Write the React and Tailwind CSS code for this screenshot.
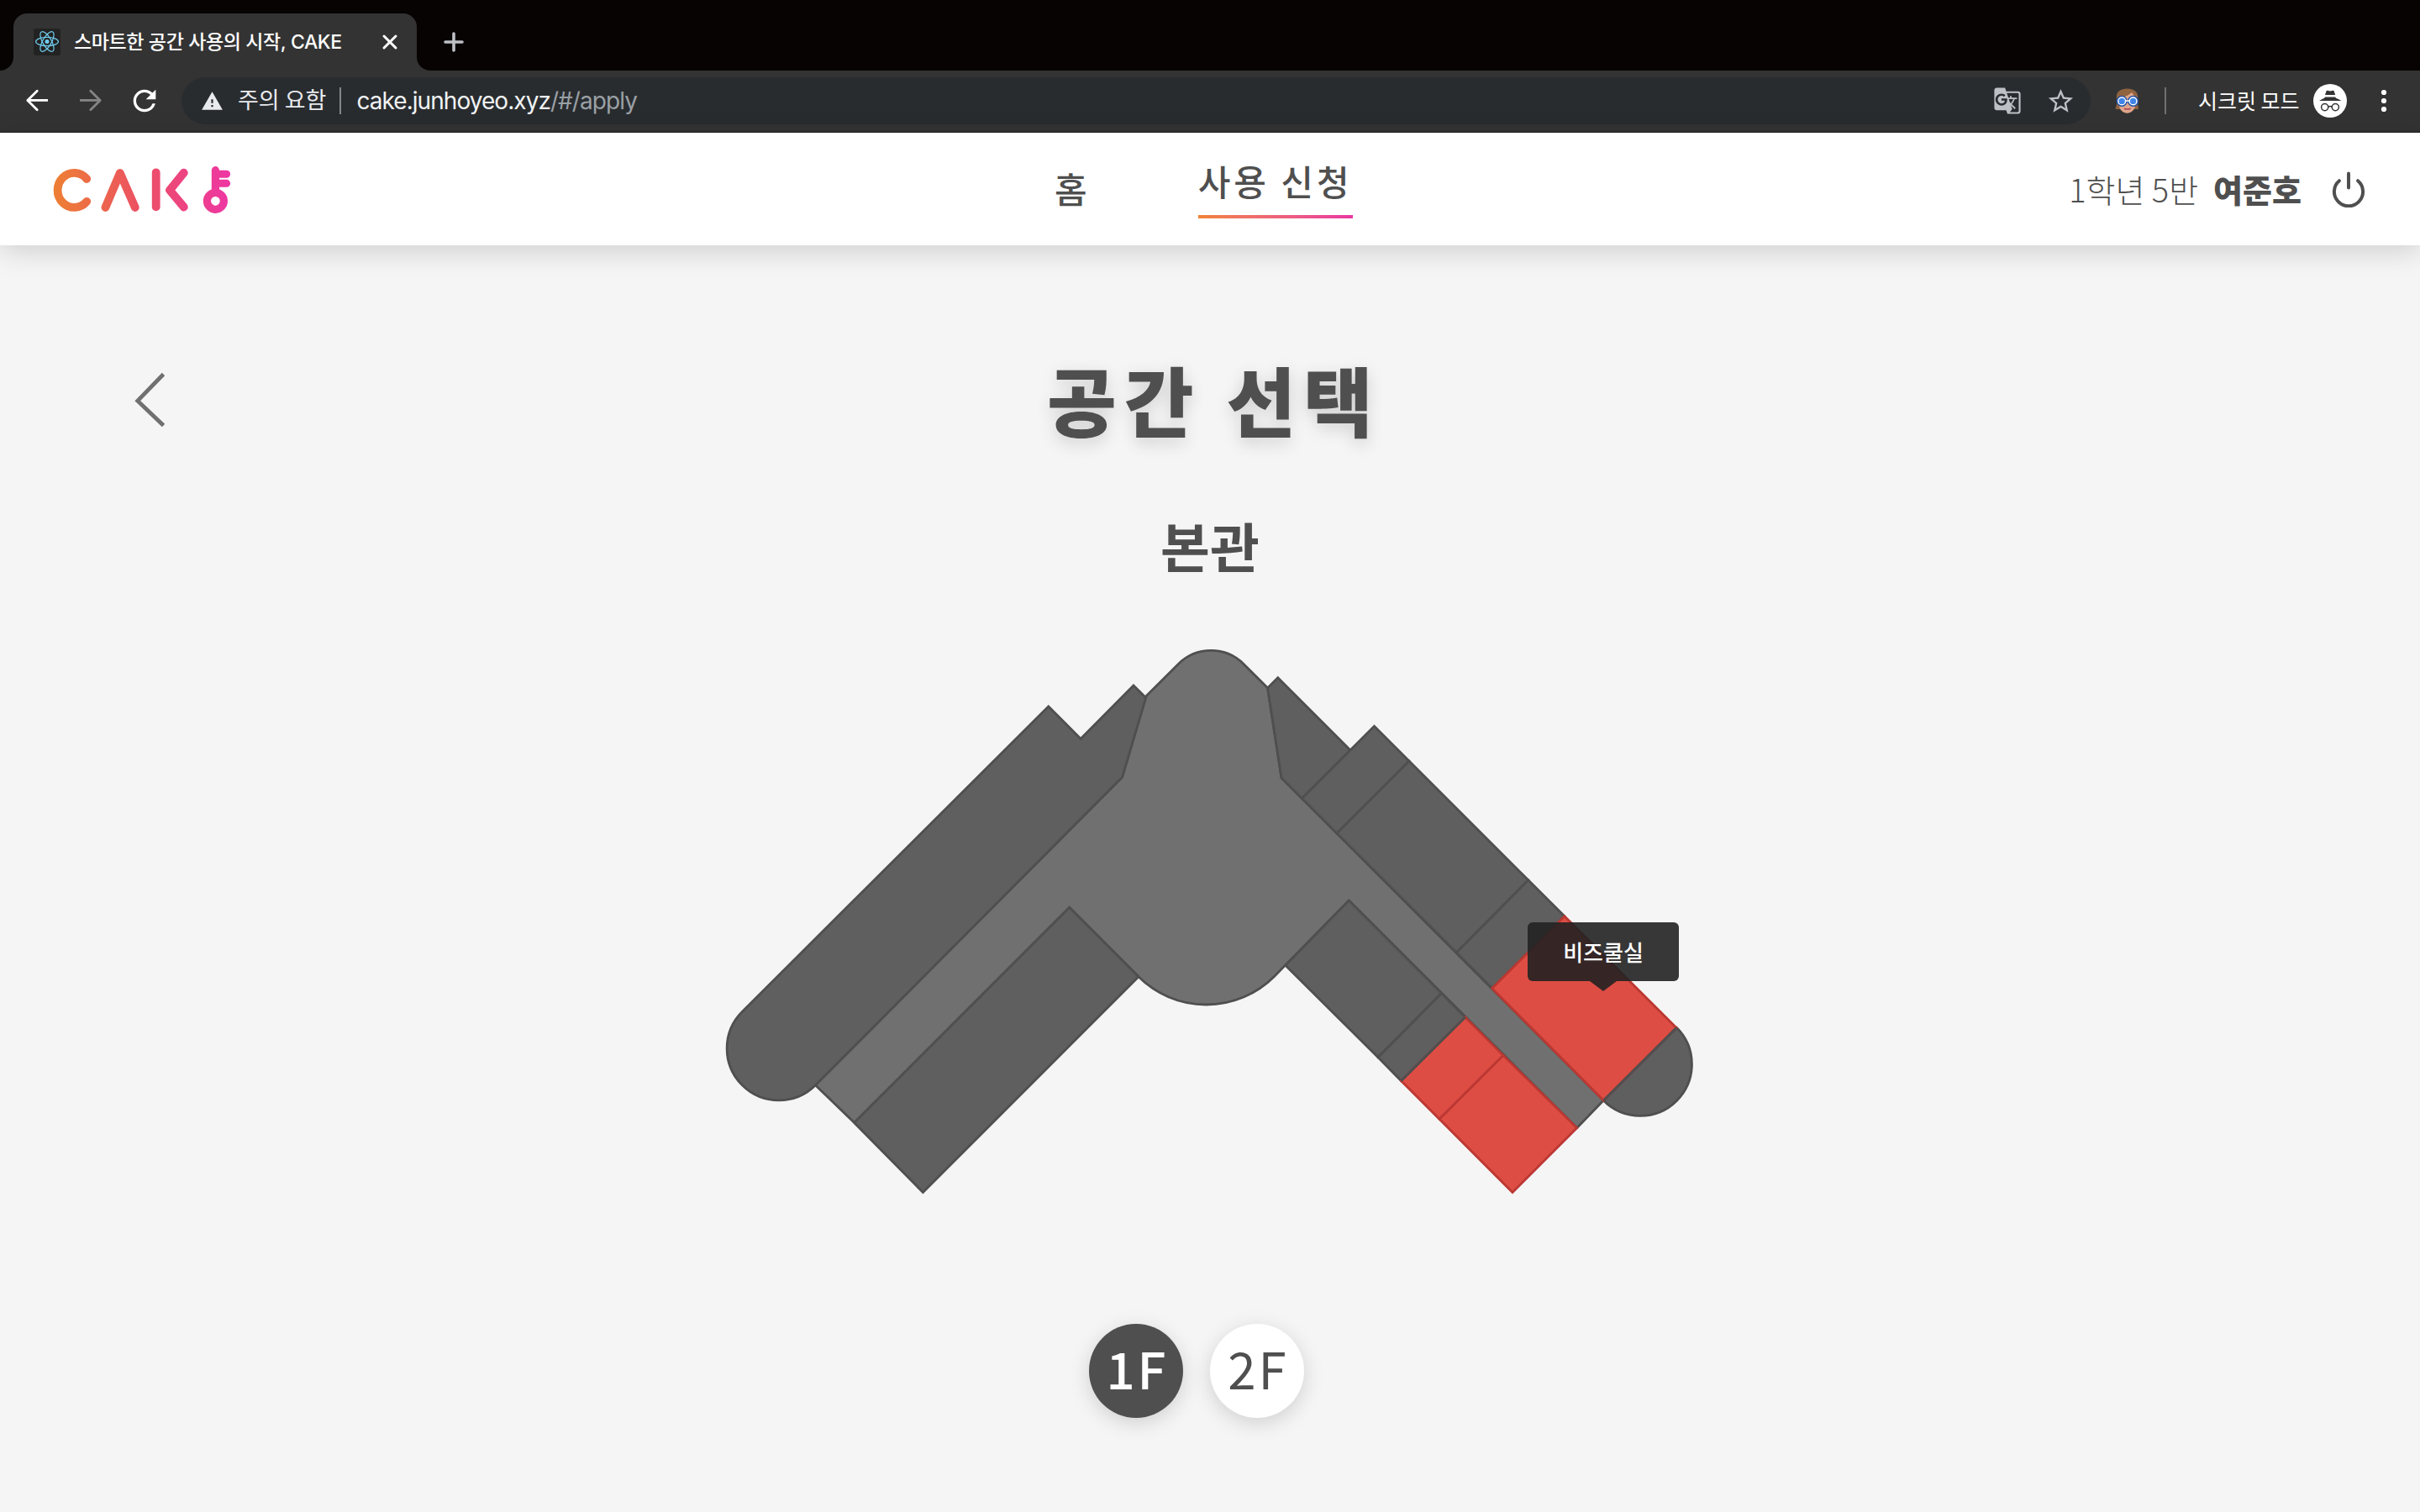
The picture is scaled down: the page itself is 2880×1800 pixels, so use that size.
import React from "react";
import { MdGTranslate, MdRefresh, MdStarBorder, MdWarning } from "react-icons/md";

const NOTO = "font-['Noto_Sans_CJK_KR',sans-serif]";

const ReactMark = () => (
  <svg viewBox="0 0 32 32" className="size-8 shrink-0 rounded-[3px] bg-[#222222]">
    <g fill="none" stroke="#6fcdee" strokeWidth="1.2" transform="translate(16 15.5)">
      <ellipse rx="13.4" ry="5.2" />
      <ellipse rx="13.4" ry="5.2" transform="rotate(60)" />
      <ellipse rx="13.4" ry="5.2" transform="rotate(120)" />
      <circle r="2.5" fill="#6fcdee" stroke="none" />
    </g>
  </svg>
);

const ArrowIcon = ({ className }) => (
  <svg viewBox="0 0 40 40" className={className} fill="none" stroke="currentColor" strokeWidth="2.8">
    <path d="M8.5 19.4H33" />
    <path d="M20.2 8.2L8.8 19.4L20.2 30.8" strokeLinecap="round" strokeLinejoin="round" />
  </svg>
);

const Avatar = () => (
  <svg viewBox="0 0 29 30" className="ml-[29px] h-[30px] w-[29px] shrink-0">
    <path d="M1.8 10C1.8 4 7 .4 14.5 .4S27.2 4 27.2 10V19L28 25H.5L2 19Z" fill="#916440" />
    <path d="M5 10L14 9L20 5L24 10V20C24 26 19 29.7 14.5 29.7S5 26 5 20Z" fill="#dfa58a" />
    <path d="M5 11C11 11 17 8 20 4.5L24.5 11V6L17 3L6 5Z" fill="#916440" />
    <circle cx="8.2" cy="15.4" r="5.3" fill="#3f86ea" stroke="#1d4fa6" strokeWidth="2.6" />
    <circle cx="21.6" cy="15.4" r="5.3" fill="#3f86ea" stroke="#1d4fa6" strokeWidth="2.6" />
    <circle cx="8.2" cy="15.4" r="4.4" fill="none" stroke="#ffffff" strokeWidth="1.4" />
    <circle cx="21.6" cy="15.4" r="4.4" fill="none" stroke="#ffffff" strokeWidth="1.4" />
    <path d="M13 15H17" stroke="#ffffff" strokeWidth="1.5" />
    <path d="M11 24.2Q14.8 26 18.6 24.2" fill="none" stroke="#a8485b" strokeWidth="1.5" />
  </svg>
);

const Incognito = () => (
  <svg viewBox="0 0 40 40" className="ml-4 size-10 shrink-0">
    <circle cx="20" cy="20" r="20" fill="#ffffff" />
    <g fill="#333333">
      <path d="M14 13L15.6 8.2Q16 7.5 17 7.8L20 8.6L23.3 7.8Q24.2 7.5 24.6 8.2L26.2 13Z" />
      <path d="M7 20Q11 17.6 13.2 16.8L14 15.6H26.2L27 16.8Q29.5 17.6 33.5 20Z" />
    </g>
    <g fill="none" stroke="#333333" strokeWidth="1.5">
      <circle cx="13.7" cy="27.6" r="4.1" />
      <circle cx="26.3" cy="27.6" r="4.1" />
      <path d="M17.8 27Q20 26 22.2 27" />
    </g>
  </svg>
);

const TabStrip = () => (
  <div className="flex h-[84px] items-end bg-[#080303]">
    <div className="size-4 bg-[#333333]">
      <div className="size-4 rounded-br-2xl bg-[#080303]" />
    </div>
    <div className="flex h-[68px] w-[480px] items-center rounded-t-2xl bg-[#333333] pl-6">
      <ReactMark />
      <span className="ml-4 w-[349px] shrink-0 font-['Inter','Noto_Sans_CJK_KR',sans-serif] text-[23px] leading-8 font-medium tracking-[-0.38px] whitespace-nowrap text-white">
        스마트한 공간 사용의 시작, CAKE
      </span>
      <svg viewBox="0 0 20 20" className="ml-[17px] size-5 shrink-0" stroke="#ffffff" strokeWidth="3" strokeLinecap="round">
        <path d="M3 3L17 17M17 3L3 17" />
      </svg>
    </div>
    <div className="size-4 bg-[#333333]">
      <div className="size-4 rounded-bl-2xl bg-[#080303]" />
    </div>
    <div className="ml-4 flex h-[68px] items-center">
      <svg viewBox="0 0 24 24" className="size-6" stroke="#bdc0c5" strokeWidth="3.6" strokeLinecap="round">
        <path d="M12 2V22M2 12H22" />
      </svg>
    </div>
  </div>
);

const Toolbar = () => (
  <div className="flex h-[74px] items-center border-b border-[#222222] bg-[#333333] pb-px pl-6 text-white">
    <ArrowIcon className="size-10 shrink-0 text-white" />
    <ArrowIcon className="ml-6 size-10 shrink-0 -scale-x-100 text-[#858585]" />
    <MdRefresh className="ml-6 size-10 shrink-0" />
    <div className="ml-6 flex h-14 w-[2272px] shrink-0 items-center rounded-full bg-[#292c2f] pr-[18px] pl-[23px]">
      <MdWarning className="size-[27px] text-[#e8eaed]" />
      <span className={`${NOTO} -mt-1 ml-[17px] text-[27px] leading-9 text-[#e8eaed]`}>주의 요함</span>
      <span className="ml-4 h-8 w-0.5 bg-[#85888b]" />
      <span className="ml-[18px] font-['Inter',sans-serif] text-[28px] leading-9 tracking-[-0.95px] text-[#f1f3f4]">
        cake.junhoyeo.xyz<span className="text-[#9aa0a6]">/#/apply</span>
      </span>
      <MdGTranslate className="ml-auto size-[34px] text-[#bdc1c6]" />
      <MdStarBorder className="ml-[29px] size-[35px] text-[#bdc1c6]" />
    </div>
    <Avatar />
    <span className="ml-[30px] h-8 w-0.5 shrink-0 bg-[#707070]" />
    <span className={`${NOTO} -mt-0.5 ml-[38px] text-[25px] leading-9 whitespace-nowrap`}>시크릿 모드</span>
    <Incognito />
    <svg viewBox="0 0 8 28" className="ml-10 h-7 w-2 shrink-0" fill="#ffffff">
      <circle cx="4" cy="4" r="3.1" />
      <circle cx="4" cy="14" r="3.1" />
      <circle cx="4" cy="24" r="3.1" />
    </svg>
  </div>
);

const Logo = () => (
  <svg viewBox="60 193 220 64" className="h-16 w-[220px] shrink-0" role="img" aria-label="CAKE">
    <defs>
      <linearGradient id="brand" gradientUnits="userSpaceOnUse" x1="64" y1="0" x2="274" y2="0">
        <stop offset="0" stopColor="#ed7f33" />
        <stop offset="0.5" stopColor="#ec5064" />
        <stop offset="1" stopColor="#ee36a3" />
      </linearGradient>
    </defs>
    <g fill="none" stroke="url(#brand)" strokeWidth="9.8" strokeLinecap="round" strokeLinejoin="round">
      <path d="M103.2 213A19.7 20.5 0 1 0 103.2 239.8" />
      <path d="M125.4 247L142.8 206L160.8 247" />
      <path d="M185.7 205.3L185.71 246.4" />
      <path d="M218.8 205.7L202 226.4L218.8 246.5" />
      <circle cx="256.4" cy="239.3" r="10" strokeWidth="9.2" />
      <path d="M256.4 202.7L256.41 228" strokeWidth="9.2" />
      <path d="M258 207.2L269.6 207.21M258 218.3L269.6 218.31" strokeWidth="9" />
    </g>
  </svg>
);

const Header = () => (
  <header className="relative z-10 flex h-[134px] items-center bg-white pl-[60px] text-[#4f4f4f] shadow-[0_6px_32px_rgba(0,0,0,0.16)]">
    <Logo />
    <nav className={`${NOTO} ml-[975px] flex h-full text-[42px] font-medium tracking-[4px]`}>
      <a className="mt-9 leading-[60px]">홈</a>
      <a className="mt-[27px] ml-32 flex w-[184px] flex-col whitespace-nowrap">
        <span className="leading-[60px]">사용 신청</span>
        <span className="mt-[11px] h-1 bg-linear-to-r from-[#f08336] to-[#ea35a2]" />
      </a>
    </nav>
    <div className={`${NOTO} ml-auto flex items-center text-[38px] leading-[60px] whitespace-nowrap`}>
      <span className="font-light">1학년 5반</span>
      <span className="ml-[18px] font-black">여준호</span>
      <svg viewBox="0 0 44 44" className="mr-[63px] ml-[34px] size-11" fill="none" stroke="currentColor" strokeWidth="4" strokeLinecap="round">
        <path d="M10.9 12.2A17.1 17.1 0 1 0 33.1 12.2" />
        <path d="M22 3.6V20.4" />
      </svg>
    </div>
  </header>
);

const ROOMS = [
  // left wing
  "M1247.8 840.9L1286.1 879.5L1349 816L1363.7 830.6L1335.5 925.3L970.6 1291.8A61.4 61.4 0 0 1 883.2 1204.5Z",
  "M1272.7 1080.2L1355 1162.8L1098.4 1419.5L1016.7 1336.6Z",
  // right wing, outer side
  "M1508.6 819L1520.8 806.8L1607 893L1549.5 950.5L1525 926Z",
  "M1607 893L1635.5 864.6L1677 906.1L1591 992L1549.5 950.5Z",
  "M1677 906.1L1818.8 1047.8L1733.3 1134L1591 992Z",
  "M1818.8 1047.8L1861.9 1090.7L1775.7 1176.6L1733.3 1134Z",
  "M1995.5 1223.5A61.4 61.4 0 1 1 1908.4 1310.3Z",
  // right wing, inner side
  "M1605.3 1071.9L1715.5 1182.5L1640 1258.8L1529.8 1149.2Z",
  "M1715.5 1182.5L1743.7 1211L1667.5 1286.7L1640 1258.8Z",
];

const OPEN_ROOMS = [
  "M1861.9 1090.7L1995 1223.5L1908.3 1310L1775.7 1176.6Z",
  "M1743.7 1211L1789 1256.4L1713 1332.3L1667.5 1286.7Z",
  "M1789 1256.4L1876.7 1342.8L1800 1419.6L1713 1332.3Z",
];

const HALL =
  "M1402.4 790.4A55 55 0 0 1 1480 790.4L1508.6 819L1525 926L1908.3 1310L1876.7 1342.8L1605.3 1071.9L1516 1163A114.4 114.4 0 0 1 1355 1162.8L1272.7 1080.2L1016.7 1336.6L970.3 1291.8L1335.5 925.3L1363.7 829.1Z";

const FloorMap = () => (
  <div className="relative mt-16 h-[672px] w-[1200px]">
    <svg viewBox="840 760 1200 672" className="h-[672px] w-[1200px]">
      <path d={HALL} fill="#707070" stroke="#4f4f4f" strokeWidth="2.8" />
      <g fill="#5f5f5f" stroke="#4f4f4f" strokeWidth="2.8">
        {ROOMS.map((d) => (
          <path key={d} d={d} />
        ))}
      </g>
      <g fill="#de4d44" stroke="#bb3832" strokeWidth="2.8">
        {OPEN_ROOMS.map((d) => (
          <path key={d} d={d} />
        ))}
      </g>
      <path d="M1995 1223.5L1908.3 1310M1743.7 1211L1667.5 1286.7" stroke="#4f4f4f" strokeWidth="2.8" />
    </svg>
    <div className="absolute top-[338px] left-[978px] flex w-[180px] flex-col items-center">
      <div className={`${NOTO} flex h-[70px] w-full items-center justify-center rounded-md bg-[#222222]/90 text-[26px] leading-[38px] font-medium text-white`}>
        비즈쿨실
      </div>
      <svg viewBox="0 0 32 12" className="h-3 w-8">
        <path d="M0 0H32L16 12Z" fill="#222222" fillOpacity="0.9" />
      </svg>
    </div>
  </div>
);

export default function App() {
  return (
    <div className="flex h-[1800px] w-[2880px] flex-col overflow-hidden bg-[#f5f5f5]">
      <TabStrip />
      <Toolbar />
      <Header />
      <main className={`${NOTO} flex flex-1 flex-col items-center text-[#4f4f4f]`}>
        <div className="flex w-full items-start pt-[117px]">
          <svg viewBox="0 0 40 66" className="mt-[34px] ml-[156px] h-[66px] w-10 shrink-0" fill="none" stroke="#707070" strokeWidth="4.8">
            <path d="M38.5 2.5L7.8 34.2L38.5 63.5" />
          </svg>
          <h1 className="ml-[1050px] text-[90px] leading-[130px] font-black tracking-[9px] whitespace-nowrap [text-shadow:0_6px_20px_rgba(0,0,0,0.16)]">
            공간 선택
          </h1>
        </div>
        <h2 className="mt-[61px] text-[64px] leading-[96px] font-bold">본관</h2>
        <FloorMap />
        <div className="mt-36 mr-8 flex gap-8 text-[60px] leading-[104px] tracking-[3px]">
          <button className="size-28 rounded-full bg-[#4f4f4f] pb-2 pl-[3px] font-medium text-white shadow-[0_6px_24px_rgba(0,0,0,0.15)]">1F</button>
          <button className="size-28 rounded-full bg-white pb-2 pl-[3px] shadow-[0_6px_24px_rgba(0,0,0,0.15)]">2F</button>
        </div>
      </main>
    </div>
  );
}
